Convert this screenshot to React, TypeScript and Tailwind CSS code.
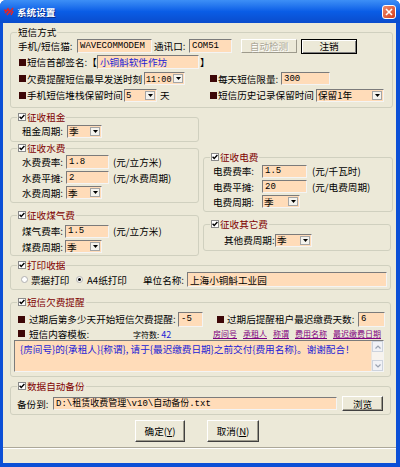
import React from "react";

const mono = "font-['Liberation_Mono','Noto_Sans_CJK_SC',monospace] text-[9px]";

function Check() {
  return (
    <span className="flex items-center justify-center w-[8px] h-[8px] bg-white border border-[#8a8a8a] shrink-0">
      <svg width="6" height="6" viewBox="0 0 6 6">
        <path d="M0.6 2.8 L2.2 4.5 L5.4 1" stroke="#000" strokeWidth="1.4" fill="none" />
      </svg>
    </span>
  );
}

function Bullet({ className = "" }: { className?: string }) {
  return <span className={`w-[7px] h-[7px] bg-[#3d0707] shrink-0 ${className}`} />;
}

function Radio({ on = false }: { on?: boolean }) {
  return (
    <span className="flex items-center justify-center w-[7px] h-[7px] rounded-full bg-white border border-[#b0b0b0] shrink-0">
      {on && <span className="w-[3px] h-[3px] rounded-full bg-black" />}
    </span>
  );
}

function Title({ text, check = false }: { text: string; check?: boolean }) {
  return (
    <div className="-mt-[7px] ml-[6px] w-fit h-[12px] px-[1px] flex items-center gap-[1px] bg-[#ece9d8]">
      {check && <Check />}
      <span className={`whitespace-nowrap leading-[12px] ${check ? "text-[#800000]" : "text-black"}`}>{text}</span>
    </div>
  );
}

function Field({ className = "", blue = false, children }: { className?: string; blue?: boolean; children?: React.ReactNode }) {
  return (
    <div
      className={`flex items-center bg-[#ffdcb9] border border-t-[#7b7b7b] border-l-[#7b7b7b] border-b-[#f4f4f4] border-r-[#f4f4f4] px-[2px] overflow-hidden whitespace-nowrap shrink-0 ${blue ? "text-[#2323d6]" : "text-black"} ${className}`}
    >
      {children}
    </div>
  );
}

function Select({ className = "", children }: { className?: string; children?: React.ReactNode }) {
  return (
    <div
      className={`flex items-center bg-[#ffdcb9] border border-t-[#7b7b7b] border-l-[#7b7b7b] border-b-[#f4f4f4] border-r-[#f4f4f4] pl-[1px] pr-[1px] shrink-0 ${className}`}
    >
      <span className="flex-1 whitespace-nowrap overflow-hidden">{children}</span>
      <span className="w-[10px] h-[9px] flex items-center justify-center bg-[#f4f3ee] border border-[#a5a5a5] shrink-0">
        <svg width="5" height="3" viewBox="0 0 5 3">
          <path d="M0 0h5L2.5 3z" fill="#000" />
        </svg>
      </span>
    </div>
  );
}

function Btn({ className = "", disabled = false, def = false, children }: { className?: string; disabled?: boolean; def?: boolean; children?: React.ReactNode }) {
  const frame = def
    ? "border border-black shadow-[inset_1px_1px_0_#fff,inset_-1px_-1px_0_#808080]"
    : disabled
    ? "border border-t-white border-l-white border-b-[#9d9a8c] border-r-[#9d9a8c]"
    : "border border-t-white border-l-white border-b-[#404040] border-r-[#404040] shadow-[inset_-1px_-1px_0_#9d9a8c]";
  return (
    <div
      className={`flex items-center justify-center bg-[#ece9d8] whitespace-nowrap shrink-0 ${frame} ${disabled ? "text-[#aca899] [text-shadow:1px_1px_0_#fff]" : "text-black"} ${className}`}
    >
      {children}
    </div>
  );
}

export default function App() {
  return (
    <div className="w-[400px] h-[467px] bg-[#0b4fd6] rounded-t-[6px] overflow-hidden flex flex-col font-['Noto_Sans_CJK_SC',sans-serif] text-[9.6px] leading-[12px] text-black">
      {/* 标题栏 */}
      <div className="h-[23px] shrink-0 flex items-center pl-[4px] pr-[4px] bg-gradient-to-b from-[#3d8ff6] via-[#0a5de6] to-[#0a4ccc]">
        <svg width="11" height="9" viewBox="0 0 11 9">
          <path d="M1 6 L4 2 L6 5 L9 1 M3 8 L5 5 M7 8 L9 4 M0 3 L3 4" stroke="#e0262a" strokeWidth="1.6" fill="none" />
        </svg>
        <span className="ml-[2px] text-white font-bold [text-shadow:1px_1px_0_#0a2f8a]">系统设置</span>
        <div className="ml-auto w-[14px] h-[14px] rounded-[3px] border border-white bg-gradient-to-br from-[#ee8a6a] to-[#d23b17] flex items-center justify-center">
          <svg width="8" height="8" viewBox="0 0 8 8">
            <path d="M1 1 L7 7 M7 1 L1 7" stroke="#fff" strokeWidth="1.6" />
          </svg>
        </div>
      </div>

      {/* 窗体 */}
      <div className="flex-1 ml-[3px] mr-[4px] mb-[4px] bg-[#ece9d8] flex flex-col pl-[7px]">
        {/* 短信方式 */}
        <div className="mt-[9px] w-[383px] border border-[#d0d0bf] rounded-[3px] pb-[4px]">
          <Title text="短信方式" />
          <div className="flex items-center h-[16px] pl-[7px]">
            <span className="w-[59px] whitespace-nowrap">手机/短信猫:</span>
            <Field className="w-[75px] h-[14px]">
              <span className={mono}>WAVECOMMODEM</span>
            </Field>
            <span className="ml-[2px] w-[35px] whitespace-nowrap">通讯口:</span>
            <Field className="w-[43px] h-[14px]">
              <span className={mono}>COM51</span>
            </Field>
            <Btn disabled className="ml-[9px] w-[56px] h-[14px]">自动检测</Btn>
            <Btn def className="ml-[4px] w-[56px] h-[15px]">注销</Btn>
          </div>
          <div className="flex items-center h-[16px] pl-[7px]">
            <Bullet className="ml-[1px]" />
            <span className="ml-[1px] w-[70px] whitespace-nowrap">短信首部签名:【</span>
            <Field blue className="w-[102px] h-[14px]">小铜斛软件作坊</Field>
            <span className="ml-[1px]">】</span>
          </div>
          <div className="flex items-center h-[17px] pl-[7px]">
            <div className="w-[192px] flex items-center shrink-0">
              <Bullet className="ml-[1px]" />
              <span className="ml-[1px] w-[117px] whitespace-nowrap">欠费提醒短信最早发送时刻</span>
              <Select className="w-[41px] h-[13px]">
                <span className="font-['Liberation_Mono','Noto_Sans_CJK_SC',monospace] text-[8.5px]">11:00</span>
              </Select>
            </div>
            <Bullet />
            <span className="ml-[1px] w-[63px] whitespace-nowrap">每天短信限量:</span>
            <Field className="w-[49px] h-[13px]">
              <span className={mono}>300</span>
            </Field>
          </div>
          <div className="flex items-center h-[16px] pl-[7px]">
            <div className="w-[192px] flex items-center shrink-0">
              <Bullet className="ml-[1px]" />
              <span className="ml-[1px] w-[97px] whitespace-nowrap">手机短信堆栈保留时间</span>
              <Select className="w-[33px] h-[13px]">
                <span className={mono}>5</span>
              </Select>
              <span className="ml-[3px]">天</span>
            </div>
            <Bullet />
            <span className="ml-[1px] w-[98px] whitespace-nowrap">短信历史记录保留时间</span>
            <Select className="w-[68px] h-[13px]">保留1年</Select>
          </div>
        </div>

        {/* 费用 两栏 */}
        <div className="flex items-start gap-[4px] mt-[9px]">
          <div className="w-[189px] flex flex-col shrink-0">
            <div className="border border-[#d0d0bf] rounded-[3px] pb-[2px]">
              <Title text="征收租金" check />
              <div className="flex items-center h-[16px] pl-[11px]">
                <span className="w-[45px] whitespace-nowrap">租金周期:</span>
                <Select className="w-[35px] h-[13px]">季</Select>
              </div>
            </div>
            <div className="mt-[6px] border border-[#d0d0bf] rounded-[3px] pb-[2px]">
              <Title text="征收水费" check />
              <div className="flex items-center h-[16px] pl-[11px]">
                <span className="w-[44px] whitespace-nowrap">水费费率:</span>
                <Field className="w-[43px] h-[14px]">
                  <span className={mono}>1.8</span>
                </Field>
                <span className="ml-[4px] whitespace-nowrap">(元/立方米)</span>
              </div>
              <div className="flex items-center h-[15px] pl-[11px]">
                <span className="w-[44px] whitespace-nowrap">水费平摊:</span>
                <Field className="w-[43px] h-[13px]">
                  <span className={mono}>2</span>
                </Field>
                <span className="ml-[4px] whitespace-nowrap">(元/水费周期)</span>
              </div>
              <div className="flex items-center h-[15px] pl-[11px]">
                <span className="w-[44px] whitespace-nowrap">水费周期:</span>
                <Select className="w-[36px] h-[13px]">季</Select>
              </div>
            </div>
            <div className="mt-[12px] border border-[#d0d0bf] rounded-[3px] pb-[1px]">
              <Title text="征收煤气费" check />
              <div className="flex items-center h-[16px] pl-[11px] mt-[2px]">
                <span className="w-[43px] whitespace-nowrap">煤气费率:</span>
                <Field className="w-[44px] h-[13px]">
                  <span className={mono}>1.5</span>
                </Field>
                <span className="ml-[4px] whitespace-nowrap">(元/立方米)</span>
              </div>
              <div className="flex items-center h-[15px] pl-[11px]">
                <span className="w-[43px] whitespace-nowrap">煤费周期:</span>
                <Select className="w-[37px] h-[13px]">季</Select>
              </div>
            </div>
          </div>

          <div className="w-[190px] flex flex-col shrink-0">
            <div className="mt-[40px] border border-[#d0d0bf] rounded-[3px] pb-[2px]">
              <Title text="征收电费" check />
              <div className="flex items-center h-[16px] pl-[9px]">
                <span className="w-[49px] whitespace-nowrap">电费费率:</span>
                <Field className="w-[45px] h-[13px]">
                  <span className={mono}>1.5</span>
                </Field>
                <span className="ml-[5px] whitespace-nowrap">(元/千瓦时)</span>
              </div>
              <div className="flex items-center h-[15px] pl-[9px]">
                <span className="w-[49px] whitespace-nowrap">电费平摊:</span>
                <Field className="w-[45px] h-[13px]">
                  <span className={mono}>20</span>
                </Field>
                <span className="ml-[5px] whitespace-nowrap">(元/电费周期)</span>
              </div>
              <div className="flex items-center h-[15px] pl-[9px]">
                <span className="w-[49px] whitespace-nowrap">电费周期:</span>
                <Select className="w-[38px] h-[13px]">季</Select>
              </div>
            </div>
            <div className="mt-[12px] border border-[#d0d0bf] rounded-[3px] pb-[2px] w-[188px]">
              <Title text="征收其它费" check />
              <div className="flex items-center h-[16px] pl-[20px] mt-[2px]">
                <span className="w-[51px] whitespace-nowrap">其他费周期:</span>
                <Select className="w-[37px] h-[13px]">季</Select>
              </div>
            </div>
          </div>
        </div>

        {/* 打印收据 */}
        <div className="mt-[9px] w-[381px] border border-[#d0d0bf] rounded-[3px] pb-[1px]">
          <Title text="打印收据" check />
          <div className="flex items-center h-[17px] pl-[10px]">
            <Radio />
            <span className="ml-[3px] w-[38px] whitespace-nowrap">票据打印</span>
            <span className="ml-[7px]">
              <Radio on />
            </span>
            <span className="ml-[4px] w-[40px] whitespace-nowrap">A4纸打印</span>
            <span className="ml-[16px] w-[44px] whitespace-nowrap">单位名称:</span>
            <Field className="w-[200px] h-[15px]">上海小铜斛工业园</Field>
          </div>
        </div>

        {/* 短信欠费提醒 */}
        <div className="mt-[12px] w-[381px] border border-[#d0d0bf] rounded-[3px] pb-[4px]">
          <Title text="短信欠费提醒" check />
          <div className="flex items-center h-[16px] mt-[3px] pl-[7px]">
            <Bullet />
            <span className="ml-[4px] w-[149px] whitespace-nowrap">过期后第多少天开始短信欠费提醒:</span>
            <Field className="w-[25px] h-[15px]">
              <span className={mono}>-5</span>
            </Field>
            <Bullet className="ml-[14px]" />
            <span className="ml-[3px] w-[131px] whitespace-nowrap">过期后提醒租户最迟缴费天数:</span>
            <Field className="w-[27px] h-[15px]">
              <span className={mono}>6</span>
            </Field>
          </div>
          <div className="flex items-center h-[13px] pl-[7px]">
            <Bullet />
            <span className="ml-[4px] w-[104px] whitespace-nowrap">短信内容模板:</span>
            <span className="w-[80px] whitespace-nowrap text-[8px] mt-[2px]">
              字符数:<span className="ml-[2px] text-[9px] text-[#2323d6]">42</span>
            </span>
            <div className="flex items-center gap-[6px] text-[8px] text-[#800080] underline whitespace-nowrap">
              <span>房间号</span>
              <span>承租人</span>
              <span>称谓</span>
              <span>费用名称</span>
              <span>最迟缴费日期</span>
            </div>
          </div>
          <div className="ml-[3px] w-[370px] h-[32px] flex bg-[#ffdcb9] border border-t-[#7b7b7b] border-l-[#7b7b7b] border-b-[#f4f4f4] border-r-[#f4f4f4]">
            <div className="flex-1 pl-[5px] pt-[2px] text-[#2323d6] whitespace-nowrap overflow-hidden">
              {"{房间号}的{承租人}{称谓}, 请于{最迟缴费日期}之前交付{费用名称}。谢谢配合！"}
            </div>
            <div className="w-[12px] flex flex-col justify-between bg-[#f7f3ee] border-l border-[#ece6de]">
              <div className="h-[11px] flex items-center justify-center bg-[#f1f2f6] border border-[#cdd3dd]">
                <svg width="6" height="4" viewBox="0 0 6 4">
                  <path d="M0.5 3.5 L3 1 L5.5 3.5" stroke="#9aa2b0" strokeWidth="1.2" fill="none" />
                </svg>
              </div>
              <div className="h-[11px] flex items-center justify-center bg-[#f1f2f6] border border-[#cdd3dd]">
                <svg width="6" height="4" viewBox="0 0 6 4">
                  <path d="M0.5 0.5 L3 3 L5.5 0.5" stroke="#9aa2b0" strokeWidth="1.2" fill="none" />
                </svg>
              </div>
            </div>
          </div>
        </div>

        {/* 数据自动备份 */}
        <div className="mt-[9px] w-[381px] border border-[#d0d0bf] rounded-[3px] pb-[2px]">
          <Title text="数据自动备份" check />
          <div className="flex items-center h-[17px] mt-[3px] pl-[6px]">
            <span className="w-[36px] whitespace-nowrap">备份到:</span>
            <Field className="w-[284px] h-[13px]">
              <span className={mono}>D:\租赁收费管理\v10\自动备份.txt</span>
            </Field>
            <Btn className="ml-[5px] w-[41px] h-[15px]">浏览</Btn>
          </div>
        </div>

        {/* 确定 / 取消 */}
        <div className="flex items-center mt-[5px] ml-[125px] gap-[22px]">
          <Btn className="w-[50px] h-[22px]">
            确定(<span className="underline">Y</span>)
          </Btn>
          <Btn className="w-[52px] h-[22px]">
            取消(<span className="underline">N</span>)
          </Btn>
        </div>

        <div className="mt-[5px] -ml-[7px] border-t border-[#aca899] shadow-[0_1px_0_#fff]" />
      </div>
    </div>
  );
}
